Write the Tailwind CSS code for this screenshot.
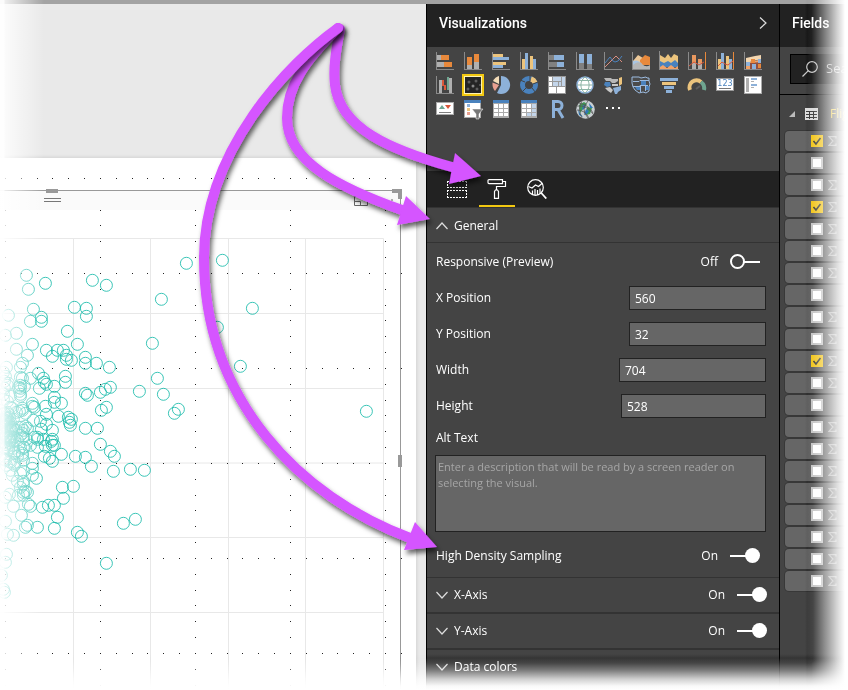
<!DOCTYPE html>
<html lang="en">
<head>
<meta charset="utf-8">
<title>Visualizations - Format pane</title>
<script src="https://cdn.jsdelivr.net/npm/@tailwindcss/browser@4"></script>
</head>
<body class="bg-white font-['Open_Sans','Noto_Sans',sans-serif] text-xs text-white">
<div class="relative flex min-h-screen flex-col overflow-hidden">
  <div class="h-1 shrink-0 bg-[#a3a3a3]"></div>
  <div class="flex flex-1">

    <!-- Report canvas -->
    <main class="flex min-w-0 flex-1 flex-col bg-[#e9e9e9]">
      <div class="h-[154px] shrink-0"></div>
      <div class="mr-[10px] flex-1 bg-white shadow-[0_0_4px_rgba(0,0,0,0.15)]">
        <svg id="chart" class="block h-[532px] w-[416px]" viewBox="0 158 416 532" role="img" aria-label="Scatter chart">
          <rect x="0" y="191" width="401" height="19" fill="#fafafa"/>
          <path d="M0 238.5H383.5V690M0 313.5H383M0 388.5H383M0 463H383M0 537.5H383M0 612.5H383M73.5 238V690M150.5 238V690M228.5 238V690M305.5 238V690" fill="none" stroke="#e8e8e8"/>
          <g id="snap" fill="#222"></g>
          <g id="points" fill="none" stroke="#1abbaa" stroke-opacity=".85" transform="translate(.4 .3)"></g>
          <path d="M0 190.5H400.5V690" fill="none" stroke="#999"/>
          <path d="M46 189h12v4H46zM392 189h10v10h-4v-6h-6zM398 455h4v12h-4z" fill="#999"/>
          <path d="M44 198.500h17M44 201.500h17" stroke="#777"/>
          <path d="M354.500 196.500h13v9h-13zM354.500 201.500h6v4M391 200h2" fill="none" stroke="#666"/>
        </svg>
      </div>
    </main>

    <!-- Visualizations pane -->
    <section class="flex w-[354px] shrink-0 flex-col border-x border-black bg-[#444]">
      <header class="flex h-[43px] shrink-0 items-center justify-between bg-[#222] pr-[10px] pl-3 pb-[6px]">
        <h2 class="font-[Roboto,sans-serif] text-sm font-medium">Visualizations</h2>
        <button aria-label="Collapse pane" class="grid h-4 w-3 place-items-center"><svg class="h-3 w-2" viewBox="0 0 8 12" fill="none" stroke="#ddd" stroke-width="1.2"><path d="M1 .5 7 6 1 11.500"/></svg></button>
      </header>
      <div class="h-[124px] shrink-0 pt-[2px] pl-1">
        <div id="gallery" class="grid grid-cols-[repeat(12,28px)] auto-rows-[24px]"></div>
      </div>
      <div class="flex h-9 shrink-0 gap-1 bg-[#222] pl-3">
        <button aria-label="Fields" class="grid w-9 place-items-center"><svg class="h-5 w-5" viewBox="0 0 20 20" fill="none" stroke="#fff" stroke-dasharray="2 1"><path d="M0 2.500h20M0 8.500h20M.5 2v7M19.500 2v7M0 11.500h20M0 18.500h20M.5 11v8M19.500 11v8"/></svg></button>
        <button aria-label="Format" class="grid w-9 place-items-center border-b-2 border-[#f2c811] pt-[2px]"><svg class="h-5 w-5" viewBox="0 0 20 20" fill="none" stroke="#fff" stroke-width="1.200"><path d="M2 .6h13.500v4H2a1 1 0 0 1-1-1v-2a1 1 0 0 1 1-1zM15.500 2.500h3V7.500H9.500V11M8.500 11h2l1 1.500V19.400h-4V12.500z"/></svg></button>
        <button aria-label="Analytics" class="grid w-9 place-items-center"><svg class="h-5 w-5" viewBox="0 0 20 20" fill="none" stroke="#fff" stroke-width="1.200"><circle cx="8.500" cy="8.500" r="7.800"/><path d="m14.300 14 5 5.500" stroke-width="1.800"/><path d="m1.500 7.500 3.500 1.500 3.500-3 3 1.500 4-3.500M5.500 15v-3.500M8 16v-6M10.500 16v-5M13 14.500V9.500"/></svg></button>
      </div>

      <button class="flex h-9 shrink-0 items-center gap-1.5 border-y border-[#333] pt-[2px] pl-[9px]"><svg class="h-2 w-3" viewBox="0 0 12 8" fill="none" stroke="#ddd" stroke-width="1.200"><path d="m.5 7 5.500-6 5.500 6"/></svg>General</button>

      <div class="shrink-0 pt-px pr-[13px] pb-[3px] pl-[9px]">
        <label class="flex h-9 items-center"><span class="flex-1">Responsive (Preview)</span><span class="mr-3">Off</span>
          <input type="checkbox" role="switch" class="relative mr-[6px] h-4 w-[30px] appearance-none before:absolute before:top-[7px] before:right-0 before:h-[2px] before:w-4 before:bg-white after:absolute after:top-0 after:left-0 after:size-[15px] after:rounded-full after:border-2 after:border-white"></label>
        <div class="flex h-9 items-center justify-between"><label for="xp">X Position</label><input id="xp" value="560" class="h-6 w-[137px] border border-[#222] bg-[#666] px-[5px]"></div>
        <div class="flex h-9 items-center justify-between"><label for="yp">Y Position</label><input id="yp" value="32" class="h-6 w-[137px] border border-[#222] bg-[#666] px-[5px]"></div>
        <div class="flex h-9 items-center justify-between"><label for="wd">Width</label><input id="wd" value="704" class="h-6 w-[147px] border border-[#222] bg-[#666] px-[5px]"></div>
        <div class="flex h-9 items-center justify-between"><label for="ht">Height</label><input id="ht" value="528" class="h-6 w-[145px] border border-[#222] bg-[#666] px-[5px]"></div>
        <label for="alt" class="flex h-[31px] items-center pb-1">Alt Text</label>
        <textarea id="alt" class="-ml-px block h-[77px] w-[331px] resize-none border border-[#222] bg-[#666] px-[2px] py-[3px] text-[11px] leading-4 placeholder:text-[#a6a6a6]" placeholder="Enter a description that will be read by a screen reader on selecting the visual."></textarea>
        <label class="mt-[6px] flex h-9 items-center"><span class="flex-1">High Density Sampling</span><span class="mr-3">On</span>
          <input type="checkbox" role="switch" checked class="relative mr-[6px] h-4 w-[30px] appearance-none before:absolute before:top-[7px] before:left-0 before:h-[2px] before:w-4 before:bg-white after:absolute after:top-0 after:right-0 after:size-[15px] after:rounded-full after:bg-white"></label>
      </div>
      <div class="flex h-[35px] shrink-0 items-center border-t border-[#333] pr-3 pl-[9px]">
        <button class="flex flex-1 items-center gap-1.5"><svg class="h-2 w-3" viewBox="0 0 12 8" fill="none" stroke="#ddd" stroke-width="1.200"><path d="m.5 1 5.500 6 5.500-6"/></svg>X-Axis</button>
        <label class="flex items-center gap-3">On <input type="checkbox" role="switch" checked class="relative h-4 w-[30px] appearance-none before:absolute before:top-[7px] before:left-0 before:h-[2px] before:w-4 before:bg-white after:absolute after:top-0 after:right-0 after:size-[15px] after:rounded-full after:bg-white"></label>
      </div>
      <div class="flex h-9 shrink-0 items-center border-t-2 border-[#333] pr-3 pl-[9px]">
        <button class="flex flex-1 items-center gap-1.5"><svg class="h-2 w-3" viewBox="0 0 12 8" fill="none" stroke="#ddd" stroke-width="1.200"><path d="m.5 1 5.500 6 5.500-6"/></svg>Y-Axis</button>
        <label class="flex items-center gap-3">On <input type="checkbox" role="switch" checked class="relative h-4 w-[30px] appearance-none before:absolute before:top-[7px] before:left-0 before:h-[2px] before:w-4 before:bg-white after:absolute after:top-0 after:right-0 after:size-[15px] after:rounded-full after:bg-white"></label>
      </div>
      <button class="flex h-9 shrink-0 items-center gap-1.5 border-t-2 border-[#333] pl-[9px]"><svg class="h-2 w-3" viewBox="0 0 12 8" fill="none" stroke="#ddd" stroke-width="1.200"><path d="m.5 1 5.500 6 5.500-6"/></svg>Data colors</button>
    </section>

    <!-- Fields pane -->
    <aside class="w-[68px] shrink-0 overflow-hidden bg-[#444]">
      <header class="flex h-[43px] items-center bg-[#222] pb-[6px] pl-3"><h2 class="font-[Roboto,sans-serif] text-sm font-medium">Fields</h2></header>
      <div class="h-12 border-b border-black pt-[7px] pl-[10px]">
        <label class="flex h-[30px] w-40 items-center gap-2 border border-black bg-[#222] pl-[11px]">
          <svg class="h-4 w-4 shrink-0" viewBox="0 0 16 16" fill="none" stroke="#ccc" stroke-width="1.200"><circle cx="10" cy="6" r="5.300"/><path d="M6.300 9.700.5 15.500"/></svg>
          <input aria-label="Search" placeholder="Search" class="w-24 text-[13px] placeholder:text-[#bbb]">
        </label>
      </div>
      <div class="flex h-9 items-center pt-[2px] pl-[9px] whitespace-nowrap text-[#f2c811]">
        <svg class="mr-[10px] h-[6px] w-[6px] shrink-0" viewBox="0 0 6 6"><path d="M6 0v6H0z" fill="#bbb"/></svg>
        <svg class="mr-3 h-3 w-[13px] shrink-0" viewBox="0 0 13 12"><path fill="#ddd" d="M0 0h13v12H0z"/><path stroke="#444" d="M1 3.500h11M1 6.500h11M1 9.500h11M4.500 3v8M8.500 3v8"/></svg>
        Flig
      </div>
      <div id="fields" class="pl-[5px]"></div>
    </aside>
  </div>

  <!-- Callout arrows -->
  <svg class="pointer-events-none absolute top-0 right-0 h-[690px] w-[848px]" viewBox="0 0 848 690" fill="none" stroke="#d554ff" stroke-width="10" stroke-linecap="round">
    <defs><filter id="sh" x="-10%" y="-10%" width="125%" height="125%"><feDropShadow dx="2" dy="4" stdDeviation="2.500" flood-color="#000" flood-opacity=".6"/></filter></defs>
    <g filter="url(#sh)"><path d="M340 29C336 50 333 68 335 85C340 128 390 150 452 167"/><path stroke="none" fill="#d554ff" d="m455 153 26 23-32 8z"/></g>
    <g filter="url(#sh)"><path d="M338 28C306 60 287 85 287 118C287 162 340 188 402 210"/><path stroke="none" fill="#d554ff" d="m406 196 24 23-33 6z"/></g>
    <g filter="url(#sh)"><path d="M338 28C290 62 204 150 204 258C204 400 300 497 410 538"/><path stroke="none" fill="#d554ff" d="m415 522 22 25-33 3z"/></g>
  </svg>

  <!-- Soft page edges -->
  <div class="pointer-events-none absolute inset-y-0 right-0 w-[43px] bg-[linear-gradient(to_right,#fff,#d6d6d6_8px,#d6d6d6)] mix-blend-color-burn"></div>
  <div class="pointer-events-none absolute inset-x-0 bottom-0 h-[36px] bg-[linear-gradient(to_bottom,#fff,#d6d6d6_9px,#d6d6d6)] mix-blend-color-burn"></div>
  <div class="pointer-events-none absolute inset-y-0 right-0 w-[43px] bg-[linear-gradient(to_right,transparent_2px,#ffffff80_20px,#ffffffd0_32px,#fff_40px)]"></div>
  <div class="pointer-events-none absolute inset-x-0 bottom-0 h-[36px] bg-[linear-gradient(to_bottom,transparent_4px,#ffffff66_16px,#ffffffc8_25px,#fffffff8_32px,#fff)]"></div>
  <div class="pointer-events-none absolute inset-y-0 left-0 w-[44px] bg-[linear-gradient(to_right,#fffffff5_4px,#ffffffd0_5px,#ffffff80_20px,transparent)]"></div>
</div>

<script>
const A = '<path fill="#8a8a8a" d="M0 0h1v17h17v1H0z"/>';
const O = '#e8893c', Y = '#ecc47d', B = '#8db1d9', D = '#4a82bd', G = '#b0b0b0', K = '#808080';
const r = (x, y, w, h, f) => `<rect x="${x}" y="${y}" width="${w}" height="${h}" fill="${f}"/>`;
const sheet = r(1, 0, 16, 18, '#aaa') + r(1, 0, 16, 3, D) + [2, 7, 12].map(x => [4, 9, 13].map(y => r(x, y, 4, y === 4 ? 4 : 3, '#fff')).join('')).join('');
const icons = [
  ['Stacked bar chart', A + r(1,3,4,5,G) + r(5,3,8,5,O) + r(1,10,7,5,G) + r(8,10,8,5,O)],
  ['Stacked column chart', A + r(3,5,5,8,O) + r(3,13,5,4,G) + r(10,2,5,8,O) + r(10,10,5,7,G)],
  ['Clustered bar chart', A + r(1,2,10,3,Y) + r(1,5,16,3,B) + r(1,10,13,3,Y) + r(1,13,10,3,B)],
  ['Clustered column chart', A + r(2,7,3,10,Y) + r(5,1,3,16,B) + r(10,4,3,13,Y) + r(13,7,3,10,B)],
  ['100% stacked bar chart', A + r(1,3,5,5,K) + r(6,3,10,5,B) + r(1,10,8,5,K) + r(9,10,7,5,B)],
  ['100% stacked column chart', A + r(3,2,5,9,B) + r(3,11,5,6,K) + r(11,2,5,10,B) + r(11,12,5,5,K)],
  ['Line chart', A + '<path fill="none" stroke="#d98d80" d="m1 15 6-6 5-5 6 6"/><path fill="none" stroke="#4a82bd" d="m1 11 5-6 3 4 2 1 3-1 4-5"/>'],
  ['Area chart', A + '<path fill="#ecc99a" d="m1 9 5-6 5 3v11H1z"/><path fill="#e8893c" d="m8 8 5-5 5 2v8H8z"/><path fill="#a9c5e2" d="M1 9q5-2 9 3v5H1z"/><path fill="#b5b5b5" d="M1 13q5-5 9-1t8 1v4H1z"/>'],
  ['Stacked area chart', '<path fill="#ecc47d" d="m0 3 5 3 3-4 3 4 3-4 4 2v9H0z"/><path fill="#4a82bd" d="m0 9 4 2 4-2 3 2 4-3 3 3v4H0z"/><path fill="#f0a36a" d="m0 15 3-2 4 3 4-3 4 3 3-2v3H0z"/><path fill="#8a8a8a" d="M-1-1h1v18h19v1H-1z"/>'],
  ['Line and stacked column chart', A + r(17,0,1,17,O) + r(4,3,4,8,'#e9985f') + r(4,11,4,6,G) + r(10,7,4,4,'#e9985f') + r(10,11,4,6,G) + '<path fill="none" stroke="#d9583a" d="m1 14 5-4 5 3 5-3"/>'],
  ['Line and clustered column chart', A + r(17,0,1,17,O) + r(2,7,3,10,Y) + r(5,1,3,16,B) + r(10,4,3,13,Y) + r(13,7,3,10,B) + '<path fill="none" stroke="#d9583a" d="m2 14 4-4 3 2 3 1 5-4"/>'],
  ['Ribbon chart', A + '<path fill="#f3d6b0" d="M2 6 11 4 17 3v4L2 11z"/><path fill="#f0a36a" d="m2 11 4-1 5-1 6-2v3L2 17z"/><path fill="#90503f" d="m5 11 12-1v7H2v-3z"/>' + r(2,10,4,4,B) + r(2,14,4,3,'#f0a36a') + r(7,7,4,4,O) + r(8,12,4,5,B) + r(14,7,3,4,B) + r(14,12,3,4,O)],
  ['Waterfall chart', A + r(3,4,3,13,G) + r(6,4,2,6,'#d9583a') + r(8,9,2,5,'#d9583a') + r(11,1,2,13,'#6fa590') + r(13,2,3,15,G)],
  ['Scatter chart', '<rect x="-1" y="-1" width="20" height="20" fill="#242424" stroke="#f2c811" stroke-width="2"/><rect x="0.500" y="0.500" width="17" height="17" fill="none" stroke="#fff3b0"/><g fill="#5c5c5c"><circle cx="5" cy="6" r="1.500"/><circle cx="12" cy="5" r="1.500"/><circle cx="9" cy="10" r="1.500" fill="#888"/><circle cx="4" cy="13" r="1.500"/><circle cx="13" cy="13" r="1.500"/><circle cx="16" cy="9" r="1"/></g>'],
  ['Pie chart', '<path fill="#8db1d9" d="M9 0a9 9 0 1 1-4 17l4-8z"/><path fill="#f3dcb8" d="M7 8 1 5Q3 1 7 0z"/><path fill="#e8a090" d="M7 9 3 15Q0 12 .5 6.500z"/>'],
  ['Donut chart', '<circle cx="9" cy="9" r="6.500" fill="none" stroke="#4a82bd" stroke-width="5"/><path fill="none" stroke="#ecc47d" stroke-width="5" d="M11 2.800a6.500 6.500 0 0 1 4 4"/><path stroke="#444" d="M10 5V0M13 8l5-2M12 12l4 5M6 12l-4 4M5 6 0 4"/>'],
  ['Treemap', r(0,0,18,18,'#999') + r(1,1,3,4,'#fff') + r(1,6,3,4,'#fff') + r(5,1,8,4,'#c3d5ea') + r(5,6,5,4,'#c3d5ea') + r(11,6,2,4,'#c3d5ea') + r(14,1,3,9,'#c3d5ea') + r(1,11,7,6,'#fff') + r(9,11,8,6,'#fff')],
  ['Map', '<circle cx="9" cy="9" r="8" fill="#fff" stroke="#8db1d9" stroke-width="1.500"/><path fill="none" stroke="#8bb3a5" d="M1 9h16M3 4.500h12M3 13.500h12M9 1C3.500 5 3.500 13 9 17M9 1c5.500 4 5.500 12 0 16"/>'],
  ['Filled map', '<path fill="#b8b8b8" d="M0 2h7l1 1h6v2l-3 2H8L6 5H2z"/><path fill="#4a82bd" d="M1 6h5l1 4-4 1-3-2z"/><path fill="#c8c8c8" d="M8 8h6v2H8zM1 12l5-1 3 3-2 3-3-2z"/><path fill="#ecc47d" d="m15 2 3-1v7l-3 2z"/><path fill="#8db1d9" d="m9 12 8-2v4l-3 2-1 2h-2z"/>'],
  ['Shape map', '<path fill="#4b4b4b" stroke="#9cbbe0" d="M0 1h7l2 1 5-1 1 1h2v3l1 3-1 3v4l-3 2-3-1-4 1-4-3-2-3-1-4z"/><path fill="#4a82bd" d="M9 5h5v4H9zM3 11h5v3H5zM14 10h3v4h-3z"/><path fill="none" stroke="#9cbbe0" d="M1 5.500h6l1-1h9M1 10.500h7v-1h8M8.500 9v7M13.500 10v5"/>'],
  ['Funnel', r(0,2,18,3,B) + r(2,6,14,3,Y) + r(4,10,10,3,B) + r(6,14,6,3,B)],
  ['Gauge', '<path fill="none" stroke="#ecc47d" stroke-width="4" d="M2 14a7 7 0 0 1 11-8"/><path fill="none" stroke="#6fa590" stroke-width="4" d="M13 6A8 8 0 0 1 16 14"/><path stroke="#5e5e5e" stroke-width="2" d="m8 13 4-3"/>'],
  ['Card', r(0,2,18,13,'#999') + r(1,3,16,11,'#fff') + '<text x="9" y="10" text-anchor="middle" font-family="DejaVu Sans" font-size="8" fill="#4a82bd">123</text>' + r(3,12,12,1,'#777')],
  ['Multi-row card', r(0,0,18,18,'#aaa') + r(1,1,16,16,'#fff') + r(2,2,3,14,G) + r(7,2,6,2,B) + r(7,5,3,1,G) + r(7,8,6,2,B) + r(7,11,3,1,G)],
  ['KPI', r(0,2,18,13,'#aaa') + r(1,3,16,11,'#fff') + '<path fill="#6fa590" d="m3 9 3-4 3 4z"/><path fill="#d9583a" d="m9 5 3 4 3-4z"/>' + r(3,12,12,1,K)],
  ['Slicer', r(0,0,17,18,'#aaa') + r(1,3,15,14,'#fff') + r(0,0,17,3,D) + r(3,4,3,3,B) + r(3,8,3,3,Y) + r(3,12,3,3,'#e8a090') + '<path fill="#777" stroke="#fff" stroke-width=".5" d="M8 9h11l-4 5v5h-3v-5z"/>'],
  ['Table', sheet],
  ['Matrix', sheet + r(12,9,4,3,'#c3d5ea') + r(12,13,4,3,'#c3d5ea') + r(7,13,4,3,'#c3d5ea') + r(12,4,4,4,'#c3d5ea')],
  ['R script visual', '<path fill="none" stroke="#8db1d9" stroke-width="3" d="M5.500 18V1.500H10a4 4 0 0 1 0 8H6M10 9.500 15 18"/>'],
  ['ArcGIS map', '<circle cx="9.500" cy="9.500" r="9.300" fill="#c9cfd2"/><path fill="#3e9a55" d="M3 5l5-3 3 2-4 5-3 4zM11 7l5 1-2 6-4 1z"/><path fill="#2f78b8" d="m7 5 3 1-2 3-2 1zM10 9l3 2-2 3-3 1zM2 9l2 4 3 4-4-2zM13 3l4 5h-3z"/><path fill="none" stroke="#555" stroke-width=".8" d="M1 6q10-1 16 8M3 3q10 2 14 10M1 10q8 0 12 8M6 1Q1 9 6 18M12 1q-8 8 0 17"/>'],
  ['More visuals', '<path fill="#fff" d="M2 7h2v2H2zM8 7h2v2H8zM14 7h2v2h-2z"/>']
];
document.getElementById('gallery').innerHTML = icons.map(([n, s]) =>
  `<button aria-label="${n}" class="grid place-items-center"><svg class="h-[18px] w-[18px] overflow-visible" viewBox="0 0 18 18">${s}</svg></button>`).join('');

const checked = [0, 3, 10], plain = [1, 7, 12];
let list = '';
for (let i = 0; i < 21; i++) {
  const on = checked.includes(i);
  list += `<label class="mb-[2px] flex h-5 items-center gap-[5px] rounded-l-sm bg-[#666] pl-[26px] shadow-[0_0_0_1px_#383838]">
    <span class="relative block size-3 shrink-0"><input type="checkbox" aria-label="Field ${i + 1}" ${on ? 'checked' : ''} class="block size-3 appearance-none border-2 border-[#c8c8c8] bg-white checked:border-[#f2c811] checked:bg-[#f2c811]">
    ${on ? '<svg class="pointer-events-none absolute inset-0 size-3" viewBox="0 0 12 12" fill="none" stroke="#444" stroke-width="1.500"><path d="m2.500 6 2.500 3 4.500-6"/></svg>' : ''}</span>
    ${plain.includes(i) ? '' : '<svg class="h-[10px] w-[9px] shrink-0" viewBox="0 0 9 10" fill="none" stroke="#aaa" stroke-width="1.200"><path d="M8 2.500V.6H1L5 5 1 9.400h7V7.500"/></svg>'}
  </label>`;
}
document.getElementById('fields').innerHTML = list;

// Snap-to-grid dots
let dots = '';
for (let i = 0; i <= 25; i++) for (let j = 0; j <= 32; j++) {
  if (i % 6 && j % 6) continue;
  if (j === 1) continue;
  dots += `<rect x="${Math.round(5 + i * 15.83)}" y="${Math.round(178 + j * 15.83)}" width="1" height="1"/>`;
}
document.getElementById('snap').innerHTML = dots;

const pts = [26,275,28,289,45,283,92,280,106,285,186,263,161,299,74,307,86,308,86,316,33,309,30,321,41,317,41,321,8,315,67,331,16,333,222,260,252,308,217,327,240,366,366,411,
16,349,32,344,77,344,46,350,57,350,63,350,52,356,27,355,66,355,66,359,71,360,85,357,85,363,96,363,109,367,152,343,157,378,139,391,163,394,178,409,174,413,110,387,105,389,100,392,85,393,87,395,106,407,101,410,65,376,65,382,22,363,20,367,38,373,43,378,44,382,46,384,54,386,39,388,30,378,22,378,24,386,20,394,20,396,54,397,54,402,61,403,32,403,32,406,34,407,45,406,46,414,58,416,68,417,71,419,69,422,70,425,85,428,97,428,52,430,40,421,46,424,41,429,33,420,25,426,27,428,23,430,52,439,51,441,52,445,54,445,37,437,37,439,43,439,34,437,26,439,37,447,30,445,45,446,100,444,110,451,114,456,61,454,75,456,85,457,91,466,44,456,49,458,52,461,113,471,130,469,144,470,32,463,32,468,23,460,32,475,36,478,23,481,20,473,25,491,27,492,23,492,73,486,62,487,63,498,
28,504,30,506,42,507,48,505,54,505,57,517,54,528,37,527,27,525,25,527,21,515,77,532,81,536,13,506,13,535,5,521,6,554,5,562,3,589,123,523,135,519,106,563,18,495,7,534,1,575,5,335,4,592];
// Dense cluster along the left edge
let seed = 7;
const rnd = () => (seed = (seed * 16807) % 2147483647) / 2147483647;
for (let i = 0; i < 110; i++) pts.push(Math.round(3 + rnd() * rnd() * 26), Math.round(366 + (rnd() + rnd()) * 66));
let c = '';
for (let i = 0; i < pts.length; i += 2) c += `<circle cx="${pts[i]}" cy="${pts[i + 1]}" r="6"/>`;
document.getElementById('points').innerHTML = c;
</script>
</body>
</html>
